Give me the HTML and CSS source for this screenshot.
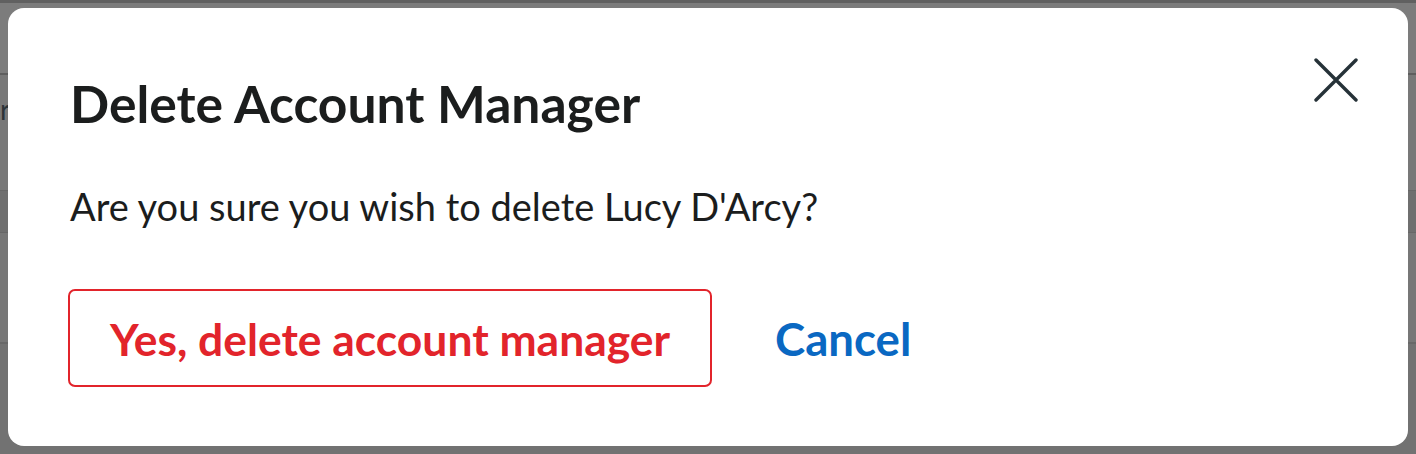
FILE: index.html
```html
<!DOCTYPE html>
<html lang="en">
<head>
<meta charset="utf-8">
<title>Delete Account Manager</title>
<link rel="stylesheet" href="styles.css">
</head>
<body>
<div class="page">
  <div class="bg-top"></div>
  <div class="bg-header"></div>
  <div class="bg-band"><span class="bg-text">r</span></div>
  <div class="bg-row-head"></div>
  <div class="bg-row"></div>
  <div class="bg-row last"></div>
</div>
<div class="overlay">
  <div class="modal" role="dialog" aria-labelledby="modal-title">
    <button class="close" aria-label="Close">
      <svg width="44" height="44" viewBox="0 0 44 44" fill="none" stroke="#263238" stroke-width="3.4" stroke-linecap="round">
        <path d="M2 2 L42 42 M42 2 L2 42"/>
      </svg>
    </button>
    <h1 id="modal-title" class="title">Delete Account Manager</h1>
    <p class="message">Are you sure you wish to delete Lucy D'Arcy?</p>
    <div class="actions">
      <button class="btn-danger">Yes, delete account manager</button>
      <button class="btn-link">Cancel</button>
    </div>
  </div>
</div>
</body>
</html>
```

FILE: styles.css
```css
* { box-sizing: border-box; }
html, body { margin: 0; padding: 0; }
body {
  width: 1416px;
  height: 454px;
  overflow: hidden;
  background: #777777;
  font-family: "Lato", "Liberation Sans", sans-serif;
}
.page { display: flex; flex-direction: column; }
.bg-top { height: 3px; background: #606060; }
.bg-header { height: 72px; background: #7c7c7c; border-bottom: 2px solid #5e5e5e; }
.bg-band { height: 115px; background: #787878; padding-top: 18px; }
.bg-text { display: block; font-size: 28px; line-height: 32px; color: #2c3338; }
.bg-row-head { height: 43px; background: #6f6f6f; border-top: 1px solid #676767; border-bottom: 1px solid #676767; }
.bg-row { height: 111px; background: #777777; border-bottom: 2px solid #686868; }
.bg-row.last { height: 120px; background: #727272; border-bottom: none; }

.overlay {
  position: fixed;
  inset: 0;
  padding: 8px;
}
.modal {
  position: relative;
  height: 438px;
  background: #fff;
  border-radius: 16px;
  padding: 65px 62px 0 62px;
}
.close {
  position: absolute;
  top: 50px;
  right: 50px;
  padding: 0;
  border: 0;
  background: none;
  width: 44px;
  height: 44px;
  display: flex;
}
.title {
  margin: 0;
  font-size: 51.6px;
  line-height: 60px;
  font-weight: 700;
  color: #1b1d1d;
}
.message {
  margin: 50px 0 0 0;
  font-size: 38px;
  line-height: 46px;
  color: #1b1d1d;
}
.actions {
  margin-top: 60px;
  display: flex;
  align-items: center;
  gap: 63px;
}
.btn-danger {
  width: 644px;
  height: 98px;
  margin-left: -2px;
  border: 2px solid #e2242b;
  border-radius: 7px;
  background: #fff;
  color: #e2242b;
  font-family: inherit;
  font-size: 44.4px;
  font-weight: 700;
  padding: 0;
}
.btn-link {
  border: 0;
  background: none;
  padding: 0;
  color: #0a68c2;
  font-family: inherit;
  font-size: 45.6px;
  font-weight: 700;
}
```
